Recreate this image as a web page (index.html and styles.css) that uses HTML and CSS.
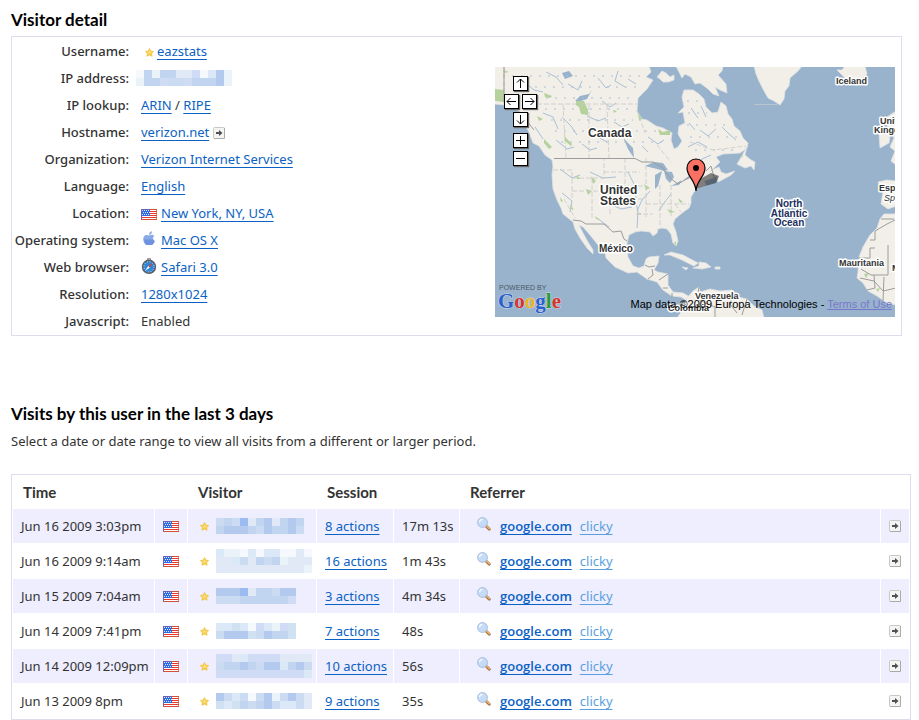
FILE: index.html
```
<!DOCTYPE html>
<html lang="en">
<head>
    <meta charset="UTF-8">
    <meta name="viewport" content="width=device-width, initial-scale=1.0">
    <title>Visitor detail</title>
    <link rel="stylesheet" href="styles.css">
</head>
<body>

<!-- shared icons -->
<svg class="sprite" aria-hidden="true">
    <symbol id="flag" viewBox="0 0 16 11">
        <rect width="16" height="11" fill="#fff"/>
        <path d="M0 .5h16M0 2.5h16M0 4.5h16M0 6.5h16M0 8.5h16M0 10.5h16" stroke="#e8382c" stroke-width="1"/>
        <rect width="9" height="7" fill="#2e6be0"/>
        <path d="M1 1.5h7M2 3.5h7M1 5.5h7" stroke="#dce8ff" stroke-dasharray="1 1"/>
        <path d="M.5 11V.5H9" fill="none" stroke="#6a61b5"/>
        <path d="M9 .5h6.500V10.500H0" fill="none" stroke="#c4603c" stroke-opacity=".7"/>
    </symbol>
    <symbol id="star" viewBox="0 0 9 9">
        <path d="M4.500 .4 5.900 3 8.700 3.500 6.800 5.500 7.100 8.300 4.500 7.200 1.900 8.300 2.200 5.500 .3 3.500 3.100 3Z" fill="#f6cf4c" stroke="#f0bd3a" stroke-width=".6"/>
        <path d="M4.500 2.500 5.300 4.300H7L5.500 5.600H3.500L2 4.300h1.700Z" fill="#fbe08a"/>
    </symbol>
    <symbol id="go" viewBox="0 0 12 12">
        <rect x=".5" y=".5" width="11" height="11" rx="1" fill="#f4f4f2" stroke="#c9c9c4"/>
        <path d="M11.500 1v10.500H1" fill="none" stroke="#aaa"/>
        <path d="M3 5h3V3l3.500 3L6 9V7H3Z" fill="#505054"/>
    </symbol>
    <symbol id="glass" viewBox="0 0 14 14">
        <path d="M9 9 12.300 12.300" stroke="#a86c38" stroke-width="2.800" stroke-linecap="round"/>
        <path d="M9.500 9.100 12.400 11.800" stroke="#f0bd80" stroke-width="1.200" stroke-linecap="round"/>
        <circle cx="5.500" cy="5.500" r="4.900" fill="#c6dbf5" stroke="#a6bcdc"/>
        <path d="M2.500 5.300a3 3 0 0 1 3-2.800" fill="none" stroke="#f4f9ff" stroke-width="1.300"/>
    </symbol>
</svg>

<h2>Visitor detail</h2>
<div class="panel">
    <table class="details">
        <tr><th scope="row">Username:</th><td><svg class="star"><use href="#star"/></svg><a href="#">eazstats</a></td></tr>
        <tr><th scope="row">IP address:</th><td><span class="mosaic ip" data-rows="wdaddllpwbea/addpccpdddea"></span></td></tr>
        <tr><th scope="row">IP lookup:</th><td><a href="#">ARIN</a> / <a href="#">RIPE</a></td></tr>
        <tr><th scope="row">Hostname:</th><td><a href="#">verizon.net</a><a href="#" aria-label="Open host"><svg class="go"><use href="#go"/></svg></a></td></tr>
        <tr><th scope="row">Organization:</th><td><a href="#">Verizon Internet Services</a></td></tr>
        <tr><th scope="row">Language:</th><td><a href="#">English</a></td></tr>
        <tr><th scope="row">Location:</th><td><svg class="flag"><use href="#flag"/></svg><a href="#">New York, NY, USA</a></td></tr>
        <tr>
            <th scope="row">Operating system:</th>
            <td>
                <svg class="icon" viewBox="0 0 16 16">
                    <path d="M8 4.600C6.500 3.700 4.500 3.600 3.200 5 1.700 6.800 2 10 3.500 12.300c1.200 1.900 2.300 2.200 4.400 1.400 2 .8 3.300.5 4.500-1.200.7-1 1.100-1.700 1.300-2.500-2.200-.9-2.300-3.900-.3-5-1.300-1.500-3.500-1.500-5.400-.4Z" fill="#8aa9e8"/>
                    <path d="M3 8.500h9.500c.2.700.6 1.200 1.200 1.500-.9 3-2.700 4.800-5.800 3.700C5 15 3.300 12 3 8.500Z" fill="#6f92e0"/>
                    <path d="M8 3.800C7.900 1.900 9.200.6 11 .3c.1 1.900-1.200 3.400-3 3.500Z" fill="#86a4e2"/>
                </svg><a href="#">Mac OS X</a>
            </td>
        </tr>
        <tr>
            <th scope="row">Web browser:</th>
            <td>
                <svg class="icon" viewBox="0 0 16 16">
                    <path d="M6.500 2V.6h3V2" fill="#ddd" stroke="#777" stroke-width=".8"/>
                    <circle cx="8" cy="8.800" r="6.400" fill="#2d86d8" stroke="#5b5f66" stroke-width="1.600"/>
                    <circle cx="8" cy="8.800" r="5.100" fill="none" stroke="#d8eafa" stroke-width="1" stroke-dasharray="1 1.670"/>
                    <path d="M11.800 4.800 8.800 9.700 7.200 8Z" fill="#e2402d"/>
                    <path d="M4.200 12.800 7.200 8l1.600 1.700Z" fill="#fff"/>
                </svg><a href="#">Safari 3.0</a>
            </td>
        </tr>
        <tr><th scope="row">Resolution:</th><td><a href="#">1280x1024</a></td></tr>
        <tr><th scope="row">Javascript:</th><td>Enabled</td></tr>
    </table>

    <div class="map">
        <svg class="map-art" viewBox="0 0 400 250" role="img" aria-label="Visitor location map">
            <rect width="400" height="250" fill="#99b3cc"/>
            <g fill="#f2efe9" stroke="#dfe2e2" stroke-width=".8" stroke-linejoin="round">
                <!-- North and Central America -->
                <path d="M-1-1H154L156 5 151 10 158 13 152 22 143 31 142 44 147 52 152 53 161 59 168 61 177 66 176 73 179 82 183 80 187 74 183 67 184 59 190 56 188 45 183 46 189 40 187 30 189 23 198 23 204 27 209 32 211 40 217 46 223 45 226 35 231 39 233 47 237 52 239 59 245 64 248 71 253 76 252 81 245 86 228 87 221 90 225 95 219 101 215 104 224 100 226 105 231 107 240 104 236 108 227 113 223 115 222 109 215 112 209 114 211 118 203 121 199 125 196 130 196 136 194 141 187 146 180 152 178 157 181 165 183 174 181 179 178 176 176 167 172 162 167 161 163 162 162 166 158 169 155 165 146 164 140 165 134 168 132 176 133 190 138 199 144 201 149 199 151 192 154 190 164 189 163 196 159 203 163 205 173 207 173 218 178 225 188 226 195 230 193 234 186 230 177 229 168 223 162 215 152 212 142 205 133 206 120 200 111 191 110 185 103 178 95 168 88 160 84 158 88 166 93 175 98 183 98 187 92 181 85 171 80 162 78 155 73 151 68 147 66 141 62 133 58 122 57 108 58 99 57 93 50 88 44 79 38 76 34 65 29 56 27 48 20 41 10 38-1 37Z"/>
                <!-- Baffin and the arctic islands -->
                <path d="M181-1H228L227 4 223 8 231 17 232 26 225 23 220 20 224 29 218 27 213 22 205 16 200 17 196 10 190 7 187 11 184 5Z"/>
                <path d="M162 10 167 4 171 6 175 10 179 8 179 13 173 15 168 15 165 12Z"/>
                <!-- Newfoundland -->
                <path d="M242 97 247 89 252 79 250 88 256 93 260 95 259 103 256 99 250 101Z"/>
                <!-- Greenland, Iceland -->
                <path d="M259-1 261 7 264 14 268 22 273 31 279 34 285 38 289 32 290 24 294 19 295 11 303 4 307-1Z"/>
                <path d="M342 3 347 3 350-1H370L372 7 364 14 351 13 348 9Z"/>
                <!-- British Isles -->
                <path d="M384 66 391 62 395 68 394 76 385 81Z M392 50 401 44V98L396 94 400 84 395 80 399 71 393 62Z"/>
                <!-- Iberia -->
                <path d="M383 115 392 113 401 114V139L393 142 386 137 388 125Z"/>
                <!-- West Africa -->
                <path d="M389 147 401 147V238L392 236 382 229 373 224 368 216 362 211 363 205 364 190 368 180 375 168 382 161 385 152Z"/>
                <!-- South America -->
                <path d="M182 251 189 241 192 231 198 224 204 220 205 225 215 222 225 224 237 223 243 230 252 232 259 239 267 243 269 251Z"/>
                <!-- Caribbean -->
                <path d="M169 188 176 185 188 188 203 196 199 199 187 193 175 188Z M204 195 211 196 216 200 207 202 198 201 204 199Z M220 200 225 200 225 202 220 202Z M187 200 193 201 191 203Z"/>
            </g>

            <!-- lakes and rivers -->
            <g fill="#99b3cc">
                <path d="M150 99 159 95 168 96 173 103 169 104 162 102ZM160 108 167 104 163 119 160 122ZM169 104 177 105 179 110 175 116 171 112ZM176 119 187 113 184 118ZM188 113 194 109 194 112Z"/>
                <path d="M80 34 85 29 94 27 97 23 92 32 86 34ZM67 6 74 4 78 9 70 12ZM128 70 132 75 138 81 139 91 133 82Z"/>
            </g>
            <g fill="none" stroke="#a9c0d7" stroke-width="1">
                <path d="M33 18 39 23 48 25M51 5 61 10 68 18M73 17 83 23 87 14M103 11 111 21 116 18M123 4 120 14 130 20M107 34 115 40 121 36M48 46 58 50 63 62M67 50 76 59 82 68M92 49 103 54 111 51M101 69 112 75M119 55 127 60 134 57M61 73 72 82 79 80M87 77 95 83 102 81M153 70 163 77 169 73M147 79 153 85M196 41 203 51M205 63 213 69 221 62M227 60 233 66 241 73M193 80 203 75 212 80M198 100 207 92 216 88M133 12 141 17M40 60 48 72M194 56 200 63M206 39 211 50"/>
                <path d="M65 102 77 111 85 108M95 105 108 111 121 110M133 105 139 117 141 131M109 134 126 142 137 140M140 131 143 145 142 161M155 124 147 133 142 144M176 127 169 136 164 144M67 126 77 134 75 145M102 151 114 160"/>
                <path stroke-dasharray="2 7" d="M8 9H150M22 20H148M42 31H137M50 42H136M56 53H138M60 64H165M66 75H170M192 34H207M193 46H212M192 58H237M195 70H245M200 83H240"/>
            </g>
            <g fill="#b5d29c">
                <path d="M0 22 9 23 9 35 0 34ZM81 34 89 34 93 43 93 48 86 47 84 40 81 38ZM49 26 57 29 55 31 50 30ZM42 49 48 52 44 54ZM69 69 77 77 76 79 70 74ZM49 72 57 80 54 82 49 76ZM8 3 14 5 9 6ZM143 45 147 52 144 54ZM163 62 168 65 175 63 175 68 165 68ZM118 43 122 44 119 46ZM82 108 85 112 82 112ZM96 109 101 114 98 117ZM91 122 97 124 93 128ZM75 137 79 143 76 142ZM65 130 68 134 66 135ZM100 149 105 153 101 152ZM141 146 146 146 146 148ZM183 131 188 135 185 136ZM172 142 180 145 175 146ZM179 176 181 174 181 179ZM149 117 155 121 151 123ZM245 90 247 88 248 90ZM369 207 374 206 371 211ZM381 222 385 221 383 225Z"/>
            </g>

            <!-- state and province lines -->
            <g fill="none" stroke="#c9c9c6" stroke-width=".8" stroke-dasharray="5 2">
                <path d="M9 0V37M42 37H142M68 37 71 91M94 38V91M112 38 114 91M142 43 150 66M58 103H77V132M77 111H109V91M109 105H145M77 124H115V147M97 111V151M115 119H149M115 132H151M130 91V119M151 91V150M151 137H194M165 118V160M176 118V149M180 137 186 145M69 132 80 151M141 147H158M195 75 218 83 251 79M162 78 176 95"/>
            </g>
            <g fill="none" stroke="#9c9c9a" stroke-width="1">
                <path d="M9 0V35L20 41 29 49 35 58 39 63M59 91.500H140L147 95 158 95 168 101 175 111 183 117 195 110 204 107 209 103M78 153 86 154 91 157H109L118 165 126 164 129 172 132 174M150 198 154 200 160 199M157 202 158 208 153 212M173 207 164 213M168 221 173 221M177 226V230M211 104 216 99 219 110"/>
                <path d="M204 220 202 232 210 236 220 240V250M238 227 235 237 242 246M252 232 247 248M187 235 195 241 206 242M386 152H399M375 173H380V164L392 157 400 153M363 191H375V181H380M393 178V208H376L366 202M365 211 379 214 388 224 401 221M379 208 380 221 372 223M389 210 388 234"/>
            </g>
            <path d="M259 37.500H282" stroke="#b9c4ce"/>

            <!-- country labels -->
            <g class="label">
                <text x="93" y="70" font-size="12">Canada</text>
                <text x="105" y="127" font-size="12">United</text>
                <text x="105" y="138" font-size="12">States</text>
                <text x="104" y="185" font-size="10">México</text>
                <text x="341" y="17" font-size="9">Iceland</text>
                <text x="385" y="57" font-size="9">United</text>
                <text x="379" y="66" font-size="9">Kingdom</text>
                <text x="384" y="124" font-size="9">España</text>
                <text x="389" y="134" font-size="9" font-weight="400" font-style="italic">Spain</text>
                <text x="344" y="199" font-size="9">Mauritania</text>
                <text x="397" y="204" font-size="9">Mali</text>
                <text x="200" y="232" font-size="9">Venezuela</text>
                <text x="173" y="244" font-size="9">Colombia</text>
                <g fill="#22305e" text-anchor="middle" font-size="10">
                    <text x="294" y="140">North</text>
                    <text x="294" y="150">Atlantic</text>
                    <text x="294" y="159">Ocean</text>
                </g>
            </g>

            <!-- marker with its shadow -->
            <path d="M201 122 205 112 216 106 224 109 221 116 210 119Z" fill="#222" opacity=".55"/>
            <path d="M201 124C200.500 113 192 110 192 101a9 9 0 0 1 18 0C210 110 201.500 113 201 124Z" fill="#fb7064" stroke="#000" stroke-width="1.200"/>
            <circle cx="201" cy="101" r="3" fill="#000"/>

            <text x="4" y="223" class="powered">POWERED BY</text>
            <text x="3" y="241" class="logo"><tspan fill="#2a5fd0">G</tspan><tspan fill="#d8322b">o</tspan><tspan fill="#eab41c">o</tspan><tspan fill="#2a5fd0">g</tspan><tspan fill="#2c9a3a">l</tspan><tspan fill="#d8322b">e</tspan></text>
        </svg>

        <div class="controls">
            <button type="button" class="up" aria-label="Pan up"><svg viewBox="0 0 13 13"><path d="M6.500 11V2M3 5.500 6.500 2 10 5.500"/></svg></button>
            <button type="button" class="left" aria-label="Pan left"><svg viewBox="0 0 13 13"><path d="M11 6.500H2M5.500 3 2 6.500 5.500 10"/></svg></button>
            <button type="button" class="right" aria-label="Pan right"><svg viewBox="0 0 13 13"><path d="M2 6.500H11M7.500 3 11 6.500 7.500 10"/></svg></button>
            <button type="button" class="down" aria-label="Pan down"><svg viewBox="0 0 13 13"><path d="M6.500 2V11M3 7.500 6.500 11 10 7.500"/></svg></button>
            <button type="button" class="in" aria-label="Zoom in"><svg viewBox="0 0 13 13"><path d="M6.500 2V11M2 6.500H11"/></svg></button>
            <button type="button" class="out" aria-label="Zoom out"><svg viewBox="0 0 13 13"><path d="M2 6.500H11"/></svg></button>
        </div>
        <div class="credit">Map data ©2009 Europa Technologies - <a href="#">Terms of Use</a></div>
    </div>
</div>

<h2>Visits by this user in the last 3 days</h2>
<p>Select a date or date range to view all visits from a different or larger period.</p>

<table class="visits">
    <colgroup>
        <col class="c-time"><col class="c-flag"><col class="c-visitor"><col class="c-actions"><col class="c-length"><col><col class="c-go">
    </colgroup>
    <thead>
        <tr>
            <th colspan="2">Time</th>
            <th>Visitor</th>
            <th colspan="2">Session</th>
            <th colspan="2">Referrer</th>
        </tr>
    </thead>
    <tbody id="visits"></tbody>
</table>

<script>
    // One letter per block of a blurred-out name
    const shades = {
        w: '#f5f8fd', a: '#eaf2fa', b: '#dbe8f7', c: '#cbdcf2', d: '#c1d5f1', e: '#b4c9ee',
        f: '#9bbcf2', l: '#e1e8f6', p: '#d0dcf6', g: '#d0e2f1'
    };

    const visits = [
        ['Jun 16 2009 3:03pm', '8 actions', '17m 13s', 'cdcfldelded/deeedceddec'],
        ['Jun 16 2009 9:14am', '16 actions', '1m 43s', 'baawbwbbwwlw/llbcldcdalll/llllllllllla'],
        ['Jun 15 2009 7:04am', '3 actions', '4m 34s', 'eeeflddcee/cccddddddp'],
        ['Jun 14 2009 7:41pm', '7 actions', '48s', 'bbgbwpbapg/ceeegceddg'],
        ['Jun 14 2009 12:09pm', '10 actions', '56s', 'pplbppppllll/cddedceebdec/pppppppppppb'],
        ['Jun 13 2009 8pm', '9 actions', '35s', 'ecbcwceacecl/gbgdcdecbbcl']
    ];

    function mosaic(pattern) {
        const rows = pattern.split('/');
        const width = rows[0].length * 8;
        const height = rows.length * 8;
        let rects = '';
        rows.forEach((row, y) => {
            [...row].forEach((shade, x) => {
                rects += `<rect x="${x * 8}" y="${y * 8}" width="8" height="8" fill="${shades[shade]}"/>`;
            });
        });
        return `<svg width="${width}" height="${height}" shape-rendering="crispEdges">${rects}</svg>`;
    }

    document.getElementById('visits').innerHTML = visits.map(([time, actions, length, name]) => `
        <tr>
            <td>${time}</td>
            <td><svg class="flag"><use href="#flag"/></svg></td>
            <td><div class="visitor"><svg class="star"><use href="#star"/></svg>${mosaic(name)}</div></td>
            <td><a href="#">${actions}</a></td>
            <td>${length}</td>
            <td><div class="referrer"><svg class="glass"><use href="#glass"/></svg><a href="#" class="site">google.com</a><a href="#" class="term">clicky</a></div></td>
            <td><a href="#" aria-label="View visit"><svg class="go"><use href="#go"/></svg></a></td>
        </tr>`).join('');

    document.querySelectorAll('.mosaic').forEach((el) => {
        el.innerHTML = mosaic(el.dataset.rows);
    });
</script>

</body>
</html>
```
FILE: styles.css
```
body {
    font-family: "Trebuchet MS", "Noto Sans", sans-serif;
    font-size: 13px;
    line-height: 18px;
    color: #333;
    background-color: #fff;
    margin: 0;
    padding: 8px 8px 0 11px;
}
.sprite {
    display: none;
}
h2 {
    font-family: "Trebuchet MS", Lato, sans-serif;
    font-size: 17px;
    line-height: 24px;
    font-weight: bold;
    color: #000;
    margin: 0 0 4px;
}
p {
    margin: 6px 0 24px;
}
a {
    color: #0b62c4;
    text-decoration: underline;
    text-underline-offset: 3px;
    text-decoration-skip-ink: none;
}
.panel {
    display: flex;
    justify-content: space-between;
    align-items: flex-start;
    border: 1px solid #dde;
    margin: 0 9px 66px 0;
    padding-bottom: 1px;
}
.details {
    border-collapse: collapse;
}
.details th, .details td {
    height: 27px;
    padding: 0 0 0 12px;
    white-space: nowrap;
}
.details th {
    width: 117px;
    padding: 0;
    text-align: right;
    font-weight: 500;
}
.details svg {
    vertical-align: middle;
}
.star {
    width: 9px;
    height: 9px;
}
.details .star {
    margin: 0 3px 0 4px;
}
.flag {
    width: 16px;
    height: 11px;
}
.icon {
    width: 16px;
    height: 16px;
}
.details .flag, .details .icon {
    margin-right: 4px;
}
.details .icon {
    margin-top: -4px;
}
.go {
    width: 12px;
    height: 12px;
}
.details .go {
    margin-left: 4px;
}
.ip {
    display: block;
    height: 16px;
    margin-left: -5px;
}
.ip svg {
    display: block;
}
.map {
    position: relative;
    flex: none;
    width: 400px;
    margin: 30px 6px 0 0;
    overflow: hidden;
}
.map-art {
    display: block;
    width: 100%;
}
.label {
    font-family: "Liberation Sans", Arial, sans-serif;
    font-weight: bold;
    fill: #333;
    stroke: #fff;
    stroke-width: 3px;
    stroke-linejoin: round;
    paint-order: stroke;
}
.powered {
    font-family: "Liberation Sans", Arial, sans-serif;
    font-size: 7px;
    fill: #4c5966;
}
.logo {
    font-family: "Liberation Serif", "Times New Roman", serif;
    font-size: 21px;
    font-weight: bold;
    stroke: #cfdbe8;
    stroke-width: 1px;
    paint-order: stroke;
}
.controls {
    position: absolute;
    top: 9px;
    left: 9px;
    display: grid;
    grid-template-columns: repeat(4, 9px);
    grid-template-rows: 18px 18px 21px 18px 18px;
}
.controls button {
    width: 15px;
    height: 15px;
    padding: 0;
    background-color: #fff;
    border: 1px solid #000;
    box-shadow: 1px 1px 1px #666;
    cursor: pointer;
}
.controls svg {
    display: block;
    fill: none;
    stroke: #000;
}
.up, .down, .in, .out {
    grid-column: 2 / 4;
}
.left {
    grid-area: 2 / 1 / 3 / 3;
}
.right {
    grid-area: 2 / 3 / 3 / 5;
}
.credit {
    position: absolute;
    right: 3px;
    bottom: 5px;
    font-family: "Liberation Sans", Arial, sans-serif;
    font-size: 11px;
    line-height: 16px;
    color: #000;
    white-space: nowrap;
}
.credit a {
    color: #77c;
    text-underline-offset: 1px;
}
.visits {
    width: 100%;
    table-layout: fixed;
    border: 1px solid #dde;
    border-collapse: separate;
    border-spacing: 1px;
}
.c-time {
    width: 141px;
}
.c-flag {
    width: 32px;
}
.c-visitor {
    width: 128px;
}
.c-actions {
    width: 76px;
}
.c-length {
    width: 65px;
}
.c-go {
    width: 28px;
}
.visits th {
    height: 32px;
    padding: 0 10px;
    font-family: "Trebuchet MS", Lato, sans-serif;
    font-size: 15px;
    text-align: left;
}
.visits td {
    height: 34px;
    padding: 0 0 0 8px;
    white-space: nowrap;
}
.visits tbody tr:nth-child(odd) td {
    background-color: #eef;
}
.visits td svg {
    display: block;
}
.visitor, .referrer {
    display: flex;
    align-items: center;
}
.visitor {
    gap: 7px;
    padding-left: 4px;
}
.glass {
    width: 14px;
    height: 14px;
    margin: 0 9px 4px;
}
.site {
    font-family: "Trebuchet MS", "Open Sans", sans-serif;
    font-weight: 600;
}
.term {
    color: #5a9fe0;
    margin-left: 8px;
}
```
